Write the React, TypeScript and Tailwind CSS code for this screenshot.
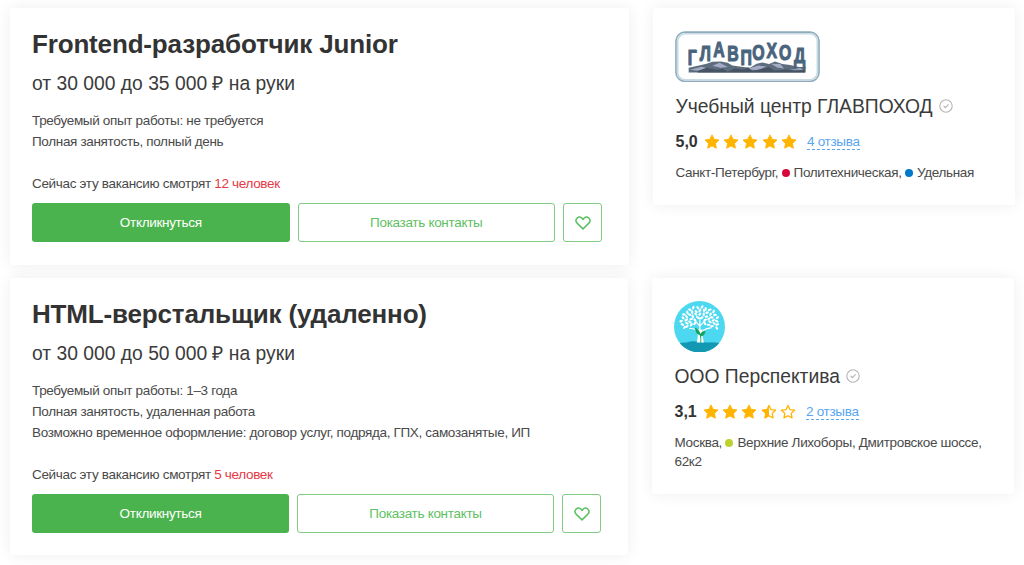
import React from "react";

const STAR =
  "M8 0.9 L10.15 5.3 L15 6 L11.5 9.4 L12.35 14.2 L8 11.9 L3.65 14.2 L4.5 9.4 L1 6 L5.85 5.3 Z";

function Star({ fill }: { fill: "full" | "half" | "empty" }) {
  return (
    <svg viewBox="0 0 16 16" className="h-4 w-4 shrink-0">
      {fill === "full" ? (
        <path d={STAR} fill="#ffb400" stroke="#ffb400" strokeWidth="0.9" strokeLinejoin="round" />
      ) : (
        <>
          <path
            d="M8 1.4 L9.95 5.6 L14.6 6.2 L11.2 9.4 L12.05 13.9 L8 11.7 L3.95 13.9 L4.8 9.4 L1.4 6.2 L6.05 5.6 Z"
            fill="none"
            stroke="#ffb400"
            strokeWidth="1.3"
            strokeLinejoin="round"
          />
          {fill === "half" && <path d="M8 1 L5.85 5.3 L1 6 L4.5 9.4 L3.65 14.2 L8 11.9 Z" fill="#ffb400" />}
        </>
      )}
    </svg>
  );
}

function Heart() {
  return (
    <svg viewBox="0 0 16 14" className="h-[14px] w-4" fill="none" stroke="#5fbf63" strokeWidth="1.5" strokeLinejoin="round">
      <path d="M8 12.9 L2.3 7.4 C0.8 5.9 0.7 3.6 2 2.2 C3.3 0.9 5.4 0.8 6.8 2 L8 3.4 L9.2 2 C10.6 0.8 12.7 0.9 14 2.2 C15.3 3.6 15.2 5.9 13.7 7.4 Z" />
    </svg>
  );
}

function Verified() {
  return (
    <svg viewBox="0 0 14 14" className="-mt-px h-[14px] w-[14px] shrink-0" fill="none" stroke="#b4b4b4" strokeWidth="1.1">
      <circle cx="7" cy="7" r="6.2" />
      <path d="M4.6 7 L6.4 8.7 L9.6 5.4" />
    </svg>
  );
}

function GlavpohodLogo() {
  return (
    <svg viewBox="0 0 435 154" className="-ml-[0.5px] h-[51.5px] w-[145px]">
      <rect x="3" y="3" width="429" height="148" rx="27" fill="#fff" stroke="#8eacbd" strokeWidth="5" />
      <rect x="8" y="8" width="419" height="138" rx="22" fill="none" stroke="#c9dae3" strokeWidth="5" />
      <path d="M41 124 L41 110 L72 103 L95 98 L112 92 L138 91 L158 95 L172 103 L205 108 L225 110 L245 98 L262 94 L282 99 L300 91 L322 99 L345 102 L372 108 L392 108 L392 124 Z" fill="#5d6d7d" />
      <path d="M45 116 L80 107 L100 112 L70 119 Z M112 104 L134 95 L158 108 L137 110 Z M215 114 L250 103 L274 106 L250 118 Z M288 98 L316 99 L327 112 L306 109 Z M345 115 L376 111 L385 117 Z" fill="#a5abc5" />
      <path d="M68 120 L95 110 L126 116 L144 113 L158 122 L179 112 L205 115 L220 109 L232 120 L282 108 L300 119 L335 115 L360 120 L390 115 L390 124 L68 124 Z" fill="#465363" />
      <text
        transform="scale(0.72 1)"
        x="72 126 183 242 297 348 403 459 519"
        y="102 91 79 89 102 88 82 88 97"
        textAnchor="middle"
        fontSize="66"
        fontWeight="700"
        fontFamily="Liberation Sans, sans-serif"
        fill="#49647c"
        stroke="#49647c"
        strokeWidth="3.5"
        strokeLinejoin="round"
      >
        ГЛАВПОХОД
      </text>
    </svg>
  );
}

const LEAVES = [
  { n: 18, rx: 53, ry: 43 },
  { n: 15, rx: 41, ry: 33 },
  { n: 11, rx: 29, ry: 23 },
  { n: 6, rx: 16, ry: 13 },
].flatMap(({ n, rx, ry }, ring) =>
  Array.from({ length: n }, (_, i) => {
    const a = Math.PI * (0.86 + (1.28 * i) / (n - 1));
    const k = 1 + (((i * 7 + ring * 3) % 5) - 2) * 0.025;
    return {
      x: 77 + rx * k * Math.cos(a),
      y: 62 + ry * k * Math.sin(a),
      r: (a * 180) / Math.PI + (i % 2 ? 35 : -25),
    };
  })
);

function TreeLogo() {
  return (
    <svg viewBox="0 0 152 155" className="-ml-[0.5px] h-[51.5px] w-[51px]" preserveAspectRatio="none">
      <clipPath id="disc">
        <ellipse cx="76" cy="77.5" rx="76" ry="77.5" />
      </clipPath>
      <g clipPath="url(#disc)">
        <rect width="152" height="155" fill="#4cd8f0" />
        <path d="M0 130 Q22 123 38 125 Q56 119 70 123 Q100 126 115 124 L152 128 V155 H0 Z" fill="#1298b2" />
        <g fill="#fff">
          {LEAVES.map((l, i) => (
            <ellipse key={i} rx="5.8" ry="3.4" transform={`translate(${l.x} ${l.y}) rotate(${l.r})`} />
          ))}
        </g>
        <path d="M77 116 V48 M77 76 L60 56 M78 74 L98 54 M75 92 Q60 82 45 82 M82 92 Q95 82 112 80" stroke="#fff" strokeWidth="3.5" fill="none" />
        <path d="M68 125 Q73 105 70 86 L84 86 Q84 108 89 125 Z" fill="#fff" />
        <path d="M78 125 Q80 112 77 103 Q64 100 62 80 Q75 85 79 99 Q82 90 94 90 Q92 104 81 106 Q82 116 81 125 Z" fill="#13a35c" />
      </g>
    </svg>
  );
}

function Actions({ wide }: { wide: string }) {
  return (
    <div className="flex gap-2 text-[13.5px] leading-[15px] tracking-[-0.31px]">
      <button className={`${wide} h-[39px] rounded-[3px] bg-[#4bb34e] text-white`}>Откликнуться</button>
      <button className={`${wide} h-[39px] rounded-[3px] border border-[#7fcc82] bg-white text-[#5fbf63]`}>
        Показать контакты
      </button>
      <button className="flex h-[39px] w-[39px] items-center justify-center rounded-[3px] border border-[#7fcc82] bg-white pt-px">
        <Heart />
      </button>
    </div>
  );
}

const CARD = "rounded-[3px] bg-white shadow-[0_0_16px_rgba(0,0,0,0.07)]";

function Vacancy({ title, salary, lines, watching, size, wide }: {
  title: string; salary: string; lines: string[]; watching: string; size: string; wide: string;
}) {
  return (
    <section className={`${CARD} ${size} pl-[22px] pt-5`}>
      <h2 className="whitespace-nowrap text-[26px] font-bold leading-8 tracking-[-0.16px] text-[#333]">{title}</h2>
      <p className="mt-3 whitespace-nowrap text-[19.3px] leading-6 text-[#3b3b3b]">{salary}</p>
      <div className="mb-[21px] mt-[14px] text-[13.5px] leading-[21px] tracking-[-0.335px] text-[#4a4a4a]">
        {lines.map((l) => (
          <p key={l} className="whitespace-nowrap">{l}</p>
        ))}
      </div>
      <p className="mb-[9px] text-[13.5px] leading-[21px] tracking-[-0.32px] text-[#4a4a4a]">
        Сейчас эту вакансию смотрят <span className="text-[#e63946]">{watching}</span>
      </p>
      <Actions wide={wide} />
    </section>
  );
}

function Company({ logo, name, rating, stars, reviews, size, children }: {
  logo: React.ReactNode; name: string; rating: string; stars: ("full" | "half" | "empty")[];
  reviews: string; size: string; children: React.ReactNode;
}) {
  return (
    <section className={`${CARD} ${size} pl-[22.5px] pt-[22.5px]`}>
      {logo}
      <div className="mt-[12.5px] flex items-center gap-1.5">
        <h3 className="whitespace-nowrap text-[19.3px] leading-6 text-[#3b3b3b]">{name}</h3>
        <Verified />
      </div>
      <div className="mt-[11.5px] flex h-6 items-center">
        <b className="w-7 text-[16px] leading-6 text-[#333]">{rating}</b>
        <div className="flex gap-[3.4px]">
          {stars.map((s, i) => (
            <Star key={i} fill={s} />
          ))}
        </div>
        <a className="ml-2.5 border-b border-dashed border-[#5aa5f0] text-[13.5px] leading-[14px] tracking-[-0.31px] text-[#5aa5f0]">{reviews}</a>
      </div>
      <p className="mt-[9px] whitespace-nowrap text-[13.5px] leading-[19px] tracking-[-0.335px] text-[#4a4a4a]">{children}</p>
    </section>
  );
}

function Dot({ color }: { color: string }) {
  return <span className={`${color} mr-1 inline-block h-2 w-2 rounded-full`} />;
}

export default function App() {
  return (
    <main
      className="flex h-[565px] w-[1024px] gap-6 overflow-hidden bg-white pl-2.5 pt-2"
      style={{ fontFamily: '"Liberation Sans", Arial, sans-serif' }}
    >
      <div className="flex w-[619px] shrink-0 flex-col gap-[13px]">
        <Vacancy
          size="h-[257px] w-[619px]"
          wide="w-[257.5px]"
          title="Frontend-разработчик Junior"
          salary="от 30 000 до 35 000 ₽ на руки"
          lines={["Требуемый опыт работы: не требуется", "Полная занятость, полный день"]}
          watching="12 человек"
        />
        <Vacancy
          size="h-[277px] w-[618px]"
          wide="w-[257px]"
          title="HTML-верстальщик (удаленно)"
          salary="от 30 000 до 50 000 ₽ на руки"
          lines={[
            "Требуемый опыт работы: 1–3 года",
            "Полная занятость, удаленная работа",
            "Возможно временное оформление: договор услуг, подряда, ГПХ, самозанятые, ИП",
          ]}
          watching="5 человек"
        />
      </div>
      <div className="flex flex-col gap-[73px]">
        <Company
          size="h-[197px] w-[362px]"
          logo={<GlavpohodLogo />}
          name="Учебный центр ГЛАВПОХОД"
          rating="5,0"
          stars={["full", "full", "full", "full", "full"]}
          reviews="4 отзыва"
        >
          Санкт-Петербург, <Dot color="bg-[#d6083b]" />Политехническая, <Dot color="bg-[#0078c9]" />Удельная
        </Company>
        <Company
          size="-ml-px h-[216px] w-[362px]"
          logo={<TreeLogo />}
          name="ООО Перспектива"
          rating="3,1"
          stars={["full", "full", "full", "half", "empty"]}
          reviews="2 отзыва"
        >
          Москва, <Dot color="bg-[#bed12c]" />Верхние Лихоборы, Дмитровское шоссе,
          <br />
          62к2
        </Company>
      </div>
    </main>
  );
}
